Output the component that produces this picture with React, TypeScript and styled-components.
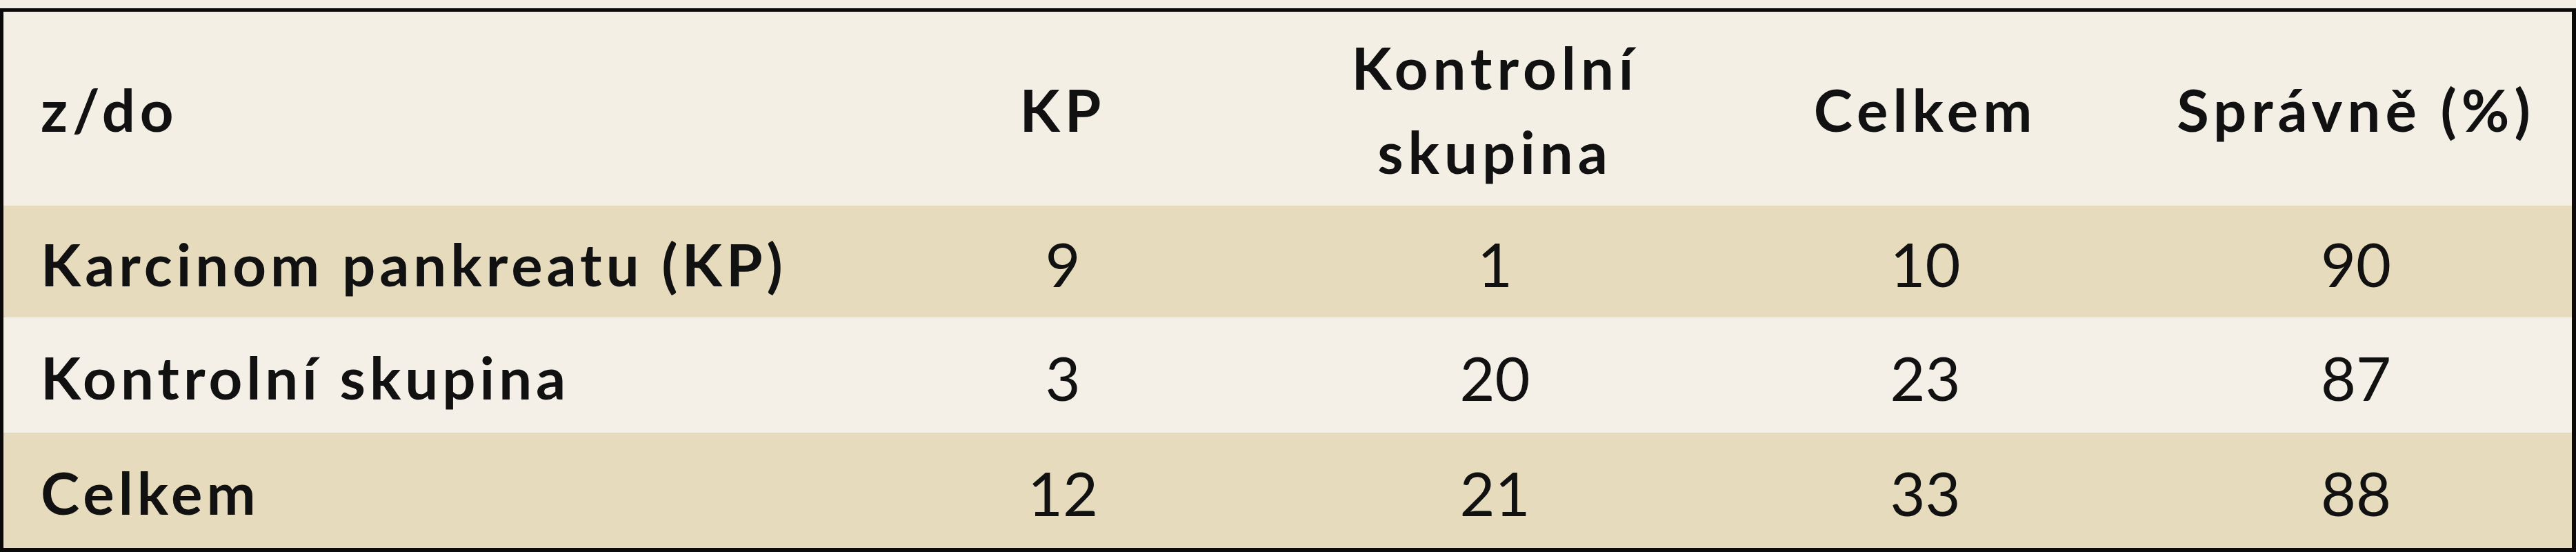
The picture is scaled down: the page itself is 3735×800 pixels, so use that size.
import styled, { createGlobalStyle } from "styled-components";

const GlobalStyle = createGlobalStyle`
  html, body {
    margin: 0;
    padding: 0;
    background: #f3efe3;
  }
  body {
    padding-top: 12px;
    font-family: "Lato", "Liberation Sans", sans-serif;
    color: #111;
  }
`;

interface Row {
  label: string;
  values: number[];
}

const rows: Row[] = [
  { label: "Karcinom pankreatu (KP)", values: [9, 1, 10, 90] },
  { label: "Kontrolní skupina", values: [3, 20, 23, 87] },
  { label: "Celkem", values: [12, 21, 33, 88] },
];

function App() {
  return (
    <>
      <GlobalStyle />
      <Table>
        <colgroup>
          <col style={{ width: 1222 }} />
          <col style={{ width: 628 }} />
          <col style={{ width: 625 }} />
          <col style={{ width: 623 }} />
          <col style={{ width: 626 }} />
        </colgroup>
        <thead>
          <HeadRow>
            <HeadCell $align="left">z/do</HeadCell>
            <HeadCell>KP</HeadCell>
            <HeadCell>
              Kontrolní
              <br />
              skupina
            </HeadCell>
            <HeadCell>Celkem</HeadCell>
            <HeadCell>Správně (%)</HeadCell>
          </HeadRow>
        </thead>
        <tbody>
          {rows.map((row, i) => (
            <BodyRow key={row.label} $shaded={i % 2 === 0} $tall={i > 0}>
              <LabelCell>{row.label}</LabelCell>
              {row.values.map((v, j) => (
                <NumCell key={j}>{v}</NumCell>
              ))}
            </BodyRow>
          ))}
        </tbody>
      </Table>
    </>
  );
}

const Table = styled.table`
  width: 100%;
  box-sizing: border-box;
  table-layout: fixed;
  border-collapse: separate;
  border-spacing: 0;
  border-style: solid;
  border-color: #0c0a08;
  border-width: 5px 6px 6px 5px;
  background: #f4efe5;
`;

const HeadRow = styled.tr`
  height: 281px;
  background: #f4efe5;
`;

const HeadCell = styled.th<{ $align?: "left" | "center" }>`
  padding: 0 0 0 ${(p) => (p.$align === "left" ? "54px" : "0")};
  text-align: ${(p) => p.$align || "center"};
  vertical-align: middle;
  font-size: 85px;
  font-weight: 700;
  letter-spacing: 7px;
  line-height: 122px;
  white-space: nowrap;
`;

const BodyRow = styled.tr<{ $shaded: boolean; $tall: boolean }>`
  height: ${(p) => (p.$tall ? "167px" : "162px")};
  background: ${(p) => (p.$shaded ? "#e6dcbd" : "#f5f0e7")};
`;

const LabelCell = styled.td`
  padding: 6px 0 0 54px;
  font-size: 85px;
  font-weight: 700;
  letter-spacing: 6px;
  line-height: 1;
  white-space: nowrap;
  vertical-align: middle;
`;

const NumCell = styled.td`
  padding: 6px 0 0;
  text-align: center;
  font-size: 88px;
  font-weight: 400;
  line-height: 1;
  vertical-align: middle;
`;

export default App;
